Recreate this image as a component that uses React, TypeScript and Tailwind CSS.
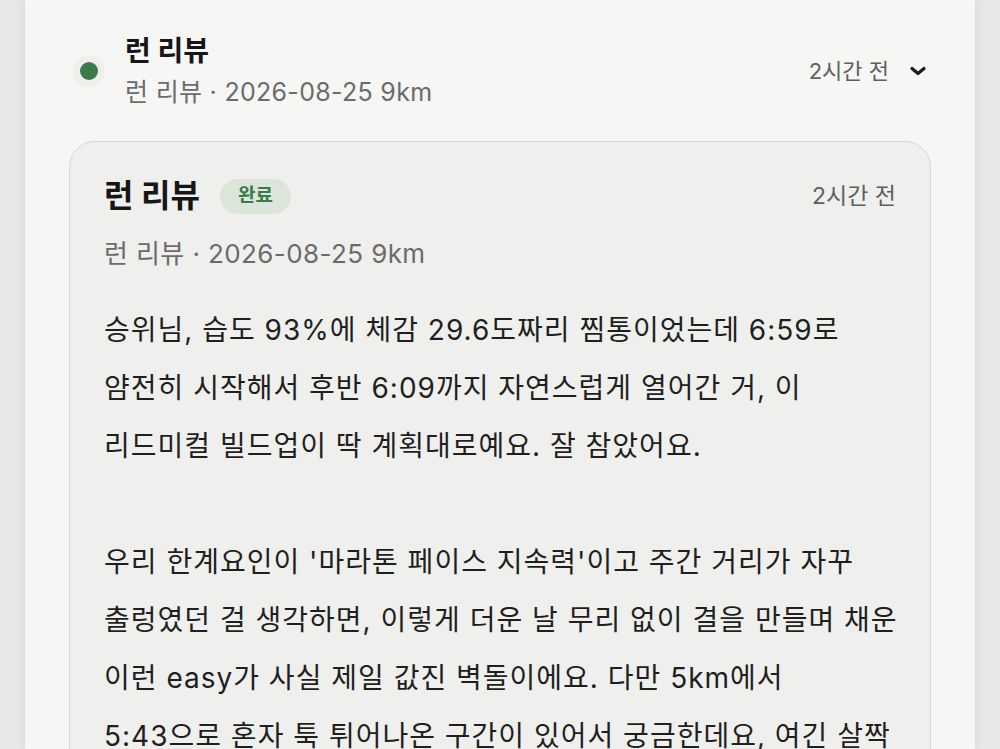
const FONT = { fontFamily: 'Inter, "Noto Sans CJK KR", "Noto Sans", sans-serif' };

const PARAGRAPHS = [
  [
    '승위님, 습도 93%에 체감 29.6도짜리 찜통이었는데 6:59로',
    '얌전히 시작해서 후반 6:09까지 자연스럽게 열어간 거, 이',
    '리드미컬 빌드업이 딱 계획대로예요. 잘 참았어요.',
  ],
  [
    "우리 한계요인이 '마라톤 페이스 지속력'이고 주간 거리가 자꾸",
    '출렁였던 걸 생각하면, 이렇게 더운 날 무리 없이 결을 만들며 채운',
    '이런 easy가 사실 제일 값진 벽돌이에요. 다만 5km에서',
    '5:43으로 혼자 툭 튀어나온 구간이 있어서 궁금한데요, 여긴 살짝',
  ],
];

function ChevronDown() {
  return (
    <svg width="18" height="12" viewBox="0 0 18 12" fill="none">
      <path d="M3 3.5 L9 8.5 L15 3.5" stroke="#1a1a1a" strokeWidth="3.2" strokeLinecap="round" strokeLinejoin="round" />
    </svg>
  );
}

export default function App() {
  return (
    <div className="h-[749px] overflow-hidden bg-[#e8e8e8] px-[25px]" style={FONT}>
      <div className="h-full bg-[#f6f6f4] px-[44px] pt-[33px] shadow-[0_0_10px_rgba(0,0,0,0.10)]">
        {/* Timeline row */}
        <div className="flex items-center">
          <div className="ml-[4px] flex h-[32px] w-[32px] items-center justify-center rounded-full bg-[#efefec]">
            <div className="h-[18px] w-[18px] rounded-full bg-[#3a7a4b]" />
          </div>
          <div className="ml-[20px] flex flex-col">
            <span className="text-[28px] font-bold leading-[36px] text-[#161616]">런 리뷰</span>
            <span className="mt-[6px] text-[25px] leading-[34px] tracking-[0.3px] text-[#6b6b6b]">
              런 리뷰 · 2026-08-25 9km
            </span>
          </div>
          <div className="ml-auto flex items-center gap-[20px] pr-[4px]">
            <span className="text-[22px] text-[#5f5f5f]">2시간 전</span>
            <ChevronDown />
          </div>
        </div>

        {/* Review card */}
        <div className="mt-[32px] rounded-[26px] border border-[#d8d8d4] bg-[#efefed] px-[34px] pt-[34px] pb-[40px]">
          <div className="flex items-center">
            <span className="text-[32px] font-bold leading-[40px] text-[#161616]">런 리뷰</span>
            <span className="ml-[20px] flex h-[35px] items-center rounded-full bg-[#dce5d9] px-[18px] text-[19px] font-bold text-[#3b7a4b]">
              완료
            </span>
            <span className="ml-auto text-[23px] text-[#5f5f5f]">2시간 전</span>
          </div>
          <div className="mt-[21px] text-[26px] leading-[34px] tracking-[0.4px] text-[#6b6b6b]">
            런 리뷰 · 2026-08-25 9km
          </div>
          <div className="mt-[30px] flex flex-col gap-[58px] text-[28px] leading-[58px] tracking-[1px] text-[#1f1f1f]">
            {PARAGRAPHS.map((lines, i) => (
              <p key={i}>
                {lines.map((line, j) => (
                  <span key={j} className="block whitespace-nowrap">
                    {line}
                  </span>
                ))}
              </p>
            ))}
          </div>
        </div>
      </div>
    </div>
  );
}
